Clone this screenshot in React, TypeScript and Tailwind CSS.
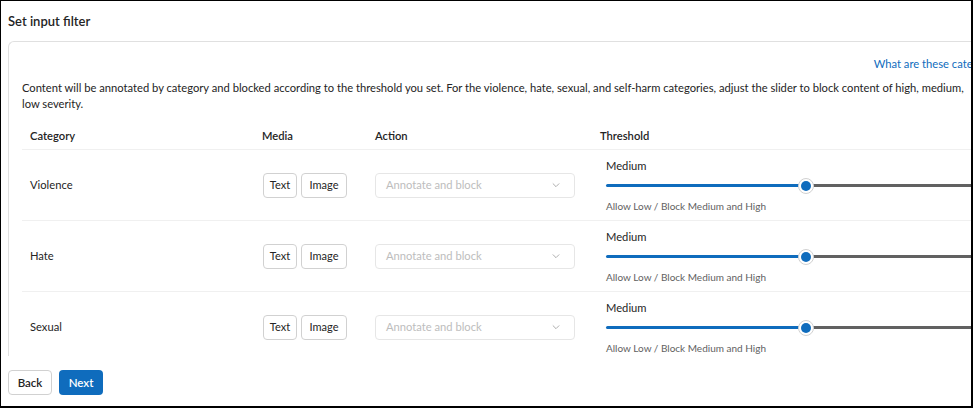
import React from 'react';

type Row = { name: string };

const rows: Row[] = [{ name: 'Violence' }, { name: 'Hate' }, { name: 'Sexual' }];

function Chevron() {
  return (
    <svg width="10" height="10" viewBox="0 0 12 12" fill="none" stroke="#9e9e9e" strokeWidth="1" strokeLinecap="round" strokeLinejoin="round">
      <path d="M2.5 4.5 6 8l3.5-3.5" />
    </svg>
  );
}

function Slider() {
  return (
    <div className="relative w-[400px] h-[16px] flex items-center">
      <div className="h-[3px] w-[200px] bg-[#0f6cbd] rounded-l-full" />
      <div className="h-[3px] w-[200px] bg-[#616161]" />
      <div className="absolute left-[192px] top-0 w-[16px] h-[16px] rounded-full bg-white border border-[#d1d1d1] flex items-center justify-center">
        <div className="w-[10px] h-[10px] rounded-full bg-[#0f6cbd]" />
      </div>
    </div>
  );
}

function FilterRow({ row }: { row: Row }) {
  return (
    <div className="grid grid-cols-[232px_113px_225px_1fr] h-[71px] border-b border-[#f0f0f0] items-center">
      <div className="pl-[8px] text-[11.2px] text-[#242424]">{row.name}</div>
      <div className="pl-[9px] flex gap-[4px]">
        <button className="h-[25px] w-[34px] border border-[#d1d1d1] rounded-[4px] text-[11px] text-[#242424] bg-white">Text</button>
        <button className="h-[25px] w-[46px] border border-[#d1d1d1] rounded-[4px] text-[11px] text-[#242424] bg-white">Image</button>
      </div>
      <div className="pl-[8px]">
        <div className="w-[200px] h-[25px] border border-[#e6e6e6] rounded-[4px] flex items-center justify-between pl-[10px] pr-[13px] text-[11.2px] text-[#bdbdbd]">
          <span>Annotate and block</span>
          <Chevron />
        </div>
      </div>
      <div className="pl-[14px] flex flex-col">
        <div className="text-[11.2px] text-[#242424] leading-[16px]">Medium</div>
        <div className="mt-[4px]">
          <Slider />
        </div>
        <div className="mt-[5px] text-[10px] text-[#616161] leading-[14px]">Allow Low / Block Medium and High</div>
      </div>
    </div>
  );
}

export default function App() {
  return (
    <div className="w-[973px] h-[408px] bg-white overflow-hidden" style={{ fontFamily: 'Lato, "Noto Sans", sans-serif' }}>
      <div className="w-[973px] h-[408px] border-l border-t border-r-2 border-b-2 border-black flex flex-col overflow-hidden">
        <h1 className="pl-[7px] pt-[11px] h-[40px] text-[13px] font-semibold text-[#242424] leading-[18px]">Set input filter</h1>
        <div className="ml-[7px] w-[1040px] h-[315px] border-l border-t border-[#e0e0e0] rounded-tl-[6px] overflow-hidden pl-[13px] pt-[14px]">
          <div className="w-[950px] flex justify-end">
            <a className="text-[11.2px] text-[#0f6cbd] leading-[16px] whitespace-nowrap -mr-[35px]">What are these categories?</a>
          </div>
          <p className="mt-[8px] w-[950px] text-[11.2px] text-[#242424] leading-[16px]">
            Content will be annotated by category and blocked according to the threshold you set. For the violence, hate, sexual, and self-harm categories, adjust the slider to block content of high, medium, low severity.
          </p>
          <div className="mt-[12px] w-[1020px]">
            <div className="grid grid-cols-[232px_113px_225px_1fr] h-[26px] items-center border-b border-[#f0f0f0] text-[11.2px] font-semibold text-[#242424]">
              <div className="pl-[8px]">Category</div>
              <div className="pl-[8px]">Media</div>
              <div className="pl-[8px]">Action</div>
              <div className="pl-[8px]">Threshold</div>
            </div>
            {rows.map((r) => (
              <FilterRow key={r.name} row={r} />
            ))}
          </div>
        </div>
        <div className="flex gap-[7px] pl-[7px] mt-[14px]">
          <button className="h-[25px] w-[44px] border border-[#d1d1d1] rounded-[4px] bg-white text-[11.5px] font-semibold text-[#242424]">Back</button>
          <button className="h-[25px] w-[44px] rounded-[4px] bg-[#0f6cbd] text-[11.5px] font-semibold text-white">Next</button>
        </div>
      </div>
    </div>
  );
}
